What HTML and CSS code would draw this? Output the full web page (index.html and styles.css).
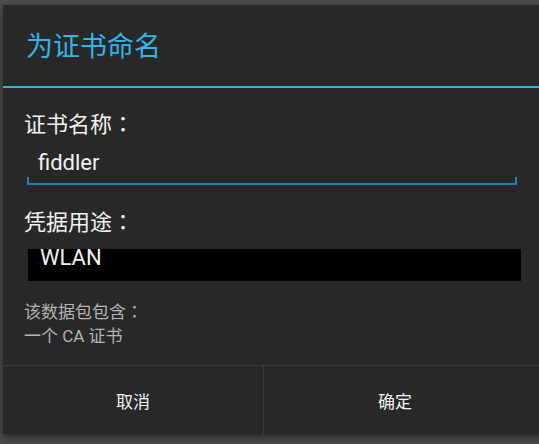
FILE: index.html
```html
<!DOCTYPE html>
<html lang="zh-CN">
<head>
<meta charset="utf-8">
<title>为证书命名</title>
<link rel="stylesheet" href="styles.css">
</head>
<body>
<div class="dialog">
  <div class="title">为证书命名</div>
  <div class="title-rule"></div>
  <div class="content">
    <div class="label">证书名称<span class="colon" lang="zh-TW">：</span></div>
    <div class="field"><span class="field-text">fiddler</span></div>
    <div class="label label-second">凭据用途<span class="colon" lang="zh-TW">：</span></div>
    <div class="select">WLAN</div>
    <div class="info">
      <div>该数据包包含<span class="colon" lang="zh-TW">：</span></div>
      <div>一个 CA 证书</div>
    </div>
  </div>
  <div class="buttons">
    <div class="btn btn-cancel">取消</div>
    <div class="btn-sep"></div>
    <div class="btn btn-ok">确定</div>
  </div>
</div>
</body>
</html>
```

FILE: styles.css
```css
html, body {
  margin: 0;
  padding: 0;
}
body {
  width: 539px;
  height: 444px;
  overflow: hidden;
  background: #4d4d4d;
  font-family: Roboto, "Noto Sans CJK SC", sans-serif;
}
.dialog {
  margin: 5px 0 0 3px;
  width: 545px;
  height: 429px;
  background: #282828;
  box-shadow: 0 3px 8px rgba(0, 0, 0, 0.55);
  display: flex;
  flex-direction: column;
}
.title {
  height: 81px;
  line-height: 80px;
  padding-left: 23px;
  font-family: "Noto Sans CJK SC", sans-serif;
  font-size: 27px;
  color: #33b5e5;
}
.title-rule {
  height: 2px;
  background: #33b5e5;
}
.content {
  flex: 1;
  padding-left: 21px;
}
.label {
  margin-top: 20px;
  line-height: 28px;
  font-family: "Noto Sans CJK SC", sans-serif;
  font-size: 22px;
  color: #f2f2f2;
}
.colon {
  font-family: "Noto Sans CJK TC", "Noto Sans CJK SC", sans-serif;
}
.label-second {
  margin-top: 21px;
}
.field {
  position: relative;
  box-sizing: border-box;
  margin-left: 3px;
  width: 490px;
  height: 49px;
  padding: 14px 0 0 11px;
  border-bottom: 2px solid #1688ad;
  font-size: 22px;
  line-height: 26px;
  color: #f2f2f2;
}
.field::before,
.field::after {
  content: "";
  position: absolute;
  bottom: 0;
  width: 2px;
  height: 6px;
  background: #1688ad;
}
.field::before { left: 0; }
.field::after { right: 0; }
.select {
  margin: 15px 0 0 4px;
  width: 481px;
  height: 32px;
  padding-left: 12px;
  background: #000;
  color: #f2f2f2;
  font-size: 22px;
  line-height: 17px;
}
.info {
  margin-top: 18px;
  font-family: Roboto, "Noto Sans CJK SC", sans-serif;
  font-size: 17px;
  line-height: 24px;
  color: #b4b4b4;
}
.buttons {
  height: 68px;
  border-top: 1px solid #3d3d3d;
  display: flex;
}
.btn {
  display: flex;
  align-items: center;
  justify-content: center;
  font-family: "Noto Sans CJK SC", sans-serif;
  font-size: 17px;
  color: #f2f2f2;
}
.btn-cancel {
  width: 260px;
}
.btn-sep {
  width: 1px;
  background: #3d3d3d;
}
.btn-ok {
  flex: 1;
  padding-right: 22px;
}
```
